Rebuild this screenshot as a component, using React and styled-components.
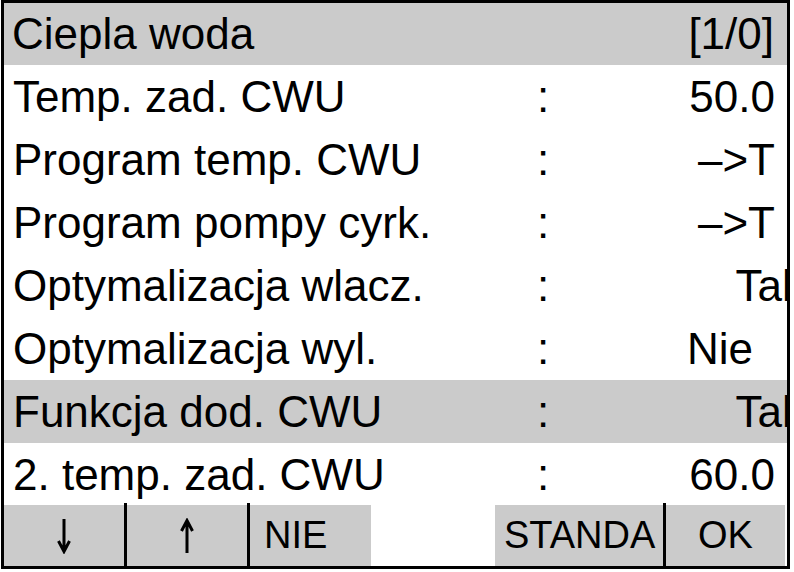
import React from "react";
import styled, { createGlobalStyle } from "styled-components";

const GlobalStyle = createGlobalStyle`
  body {
    margin: 0;
    background: #fff;
    font-family: "Liberation Sans", Arial, sans-serif;
  }
`;

const GRAY = "#cbcbcb";

const Screen = styled.div`
  box-sizing: border-box;
  width: 789px;
  height: 569px;
  margin-left: 1px;
  border: 3px solid #000;
  overflow: hidden;
  display: flex;
  flex-direction: column;
  background: #fff;
  color: #000;
  font-size: 44px;
`;

const Header = styled.div`
  height: 62px;
  flex: none;
  display: flex;
  align-items: center;
  justify-content: space-between;
  padding: 0 13px 0 8px;
  background: ${GRAY};
  line-height: 62px;
`;

const Row = styled.div`
  height: ${(p) => p.$h || 63}px;
  flex: none;
  display: grid;
  grid-template-columns: 524px 12px 1fr;
  padding: 1px 12px 0 9px;
  box-sizing: border-box;
  align-items: center;
  white-space: nowrap;
  background: ${(p) => (p.$selected ? GRAY : "transparent")};
`;

const Label = styled.span``;

const Colon = styled.span``;

// values sit in a fixed field, some of them spill past the frame edge
const Value = styled.span`
  text-align: right;
  margin-right: ${(p) => p.$shift || 0}px;
`;

const ButtonBar = styled.div`
  flex: 1;
  display: flex;
  align-items: stretch;
  font-size: 38px;
`;

const SoftKey = styled.div`
  width: ${(p) => p.$w}px;
  flex: none;
  display: flex;
  align-items: center;
  justify-content: ${(p) => (p.$left ? "flex-start" : "center")};
  padding-left: ${(p) => (p.$left ? p.$left : 0)}px;
  box-sizing: border-box;
  background: ${(p) => (p.$empty ? "#fff" : GRAY)};
  white-space: nowrap;
  overflow: hidden;
`;

const Divider = styled.div`
  width: 3px;
  flex: none;
  margin-top: -2px;
  background: #000;
`;

const Arrow = ({ up }) => (
  <svg
    width="16"
    height="36"
    viewBox="0 0 16 36"
    style={{ transform: up ? "rotate(180deg)" : undefined }}
  >
    <path
      d="M8 1 V33 M2.5 23 L8 33.5 L13.5 23"
      fill="none"
      stroke="#000"
      strokeWidth="3"
    />
  </svg>
);

const rows = [
  { label: "Temp. zad. CWU", value: "50.0" },
  { label: "Program temp. CWU", value: "–>T" },
  { label: "Program pompy cyrk.", value: "–>T" },
  { label: "Optymalizacja wlacz.", value: "Tak", shift: -29 },
  { label: "Optymalizacja wyl.", value: "Nie", shift: 22 },
  { label: "Funkcja dod. CWU", value: "Tak", shift: -29, selected: true },
  { label: "2. temp. zad. CWU", value: "60.0", h: 62 },
];

export default function App() {
  return (
    <>
      <GlobalStyle />
      <Screen>
        <Header>
          <span>Ciepla woda</span>
          <span>[1/0]</span>
        </Header>
        {rows.map((r) => (
          <Row key={r.label} $selected={r.selected} $h={r.h}>
            <Label>{r.label}</Label>
            <Colon>:</Colon>
            <Value $shift={r.shift}>{r.value}</Value>
          </Row>
        ))}
        <ButtonBar>
          <SoftKey $w={120}>
            <Arrow />
          </SoftKey>
          <Divider />
          <SoftKey $w={120}>
            <Arrow up />
          </SoftKey>
          <Divider />
          <SoftKey $w={121} $left={14}>NIE</SoftKey>
          <SoftKey $w={124} $empty />
          <SoftKey $w={168} $left={9}>STANDA</SoftKey>
          <Divider />
          <SoftKey $w={119}>OK</SoftKey>
        </ButtonBar>
      </Screen>
    </>
  );
}
